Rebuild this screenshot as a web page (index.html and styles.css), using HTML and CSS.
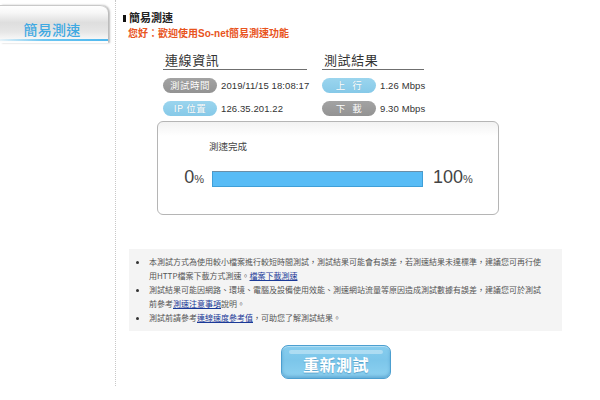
FILE: index.html
```html
<!DOCTYPE html>
<html lang="zh-Hant">
<head>
<meta charset="utf-8">
<title>簡易測速</title>
<link rel="stylesheet" href="styles.css">
</head>
<body>
<div class="page">
  <aside class="sidebar">
    <div class="tab"><span class="tab-label">簡易測速</span></div>
  </aside>
  <main class="main">
    <h1 class="title"><span class="marker"></span>簡易測速</h1>
    <p class="greeting">您好：歡迎使用So-net簡易測速功能</p>

    <div class="info">
      <div class="col">
        <h2 class="col-head">連線資訊</h2>
        <div class="row"><span class="pill grey">測試時間</span><span class="val">2019/11/15 18:08:17</span></div>
        <div class="row"><span class="pill blue">IP 位置</span><span class="val">126.35.201.22</span></div>
      </div>
      <div class="col">
        <h2 class="col-head">測試結果</h2>
        <div class="row"><span class="pill blue wide">上 行</span><span class="val">1.26 Mbps</span></div>
        <div class="row"><span class="pill grey wide">下 載</span><span class="val">9.30 Mbps</span></div>
      </div>
    </div>

    <div class="progress-box">
      <div class="status">測速完成</div>
      <div class="bar-row">
        <span class="pct left">0<small>%</small></span>
        <span class="bar"><span class="fill" style="width:100%"></span></span>
        <span class="pct right">100<small>%</small></span>
      </div>
    </div>

    <ul class="notes">
      <li><span class="ln">本測試方式為使用較小檔案進行較短時間測試，測試結果可能會有誤差，若測速結果未達標準，建議您可再行使</span><span class="ln">用HTTP檔案下載方式測速。<a href="#">檔案下載測速</a></span></li>
      <li><span class="ln">測試結果可能因網路、環境、電腦及設備使用效能、測速網站流量等原因造成測試數據有誤差，建議您可於測試</span><span class="ln">前參考<a href="#">測速注意事項</a>說明。</span></li>
      <li><span class="ln">測試前請參考<a href="#">連線速度參考值</a>，可助您了解測試結果。</span></li>
    </ul>

    <button class="retest" type="button">重新測試</button>
  </main>
</div>
</body>
</html>
```

FILE: styles.css
```css
html, body {
  margin: 0;
  padding: 0;
  background: #fff;
}
body {
  font-family: "Liberation Sans", "Noto Sans CJK TC", sans-serif;
  color: #333;
}
.page {
  display: flex;
  align-items: stretch;
  width: 600px;
}
.sidebar {
  width: 115px;
  border-right: 1px dotted #c8c8c8;
  flex: none;
}
.tab {
  position: relative;
  margin-top: 5px;
  width: 108px;
  height: 38px;
  box-sizing: border-box;
  border-top: 1px solid #c9c9c9;
  border-radius: 0 8px 0 0;
  background: linear-gradient(#ffffff 0, #f7f7f7 18%, #dedede 45%, #e6e6e6 70%, #f6f6f6 88%, #ffffff 100%);
  box-shadow: 2px 0 2px rgba(0,0,0,0.28);
  text-align: center;
  padding-top: 15px;
  padding-right: 4px;
}
.tab::after {
  content: "";
  position: absolute;
  left: 0;
  right: 0;
  bottom: 2px;
  height: 2px;
  background: linear-gradient(90deg, rgba(120,200,240,0.15), #6cc6f2 40%, #4fb8ee);
}
.tab-label {
  font-family: "Noto Sans CJK TC", sans-serif;
  font-size: 14px;
  line-height: 16px;
  color: #3fa9e2;
  letter-spacing: 0.3px;
  font-weight: 500;
}
.main {
  flex: 1;
  padding: 10px 0 7px 7px;
}
.title {
  margin: 0 0 3px;
  font-family: "Noto Sans CJK TC", sans-serif;
  font-size: 11px;
  line-height: 14px;
  font-weight: bold;
  color: #222;
  display: flex;
  align-items: center;
}
.marker {
  display: inline-block;
  width: 3px;
  height: 7px;
  background: #111;
  margin: 3px 3px 0 0;
}
.greeting {
  margin: 0;
  font-family: "Liberation Sans", "Noto Sans CJK TC", sans-serif;
  font-size: 10px;
  line-height: 14px;
  font-weight: bold;
  color: #e8541d;
  padding-left: 5px;
}
.info {
  display: grid;
  grid-template-columns: 144px 102px;
  column-gap: 15px;
  margin: 10px 0 0 40px;
}
.col-head {
  margin: 0 0 8px;
  font-family: "Noto Sans CJK TC", sans-serif;
  font-size: 13px;
  font-weight: normal;
  line-height: 18px;
  letter-spacing: 0.6px;
  color: #333;
  border-bottom: 1px solid #6f6f6f;
  padding-left: 2px;
}
.row {
  display: flex;
  align-items: center;
  gap: 4px;
  height: 15px;
  margin-bottom: 8px;
}
.row:last-child {
  margin-bottom: 0;
}
.pill {
  flex: none;
  width: 54px;
  height: 15px;
  border-radius: 8px;
  color: #fff;
  font-family: "Noto Sans CJK TC", sans-serif;
  font-size: 9.5px;
  line-height: 15px;
  text-align: center;
  letter-spacing: 0.5px;
  text-shadow: 0 0 1px rgba(0,0,0,0.15);
}
.pill.wide {
  word-spacing: 4px;
}
.pill.grey {
  background: linear-gradient(#a3a3a3, #939393);
}
.pill.blue {
  background: linear-gradient(#9bd5ee, #86c9e8);
}
.val {
  font-size: 9.5px;
  color: #333;
  white-space: nowrap;
  letter-spacing: 0.1px;
}
.progress-box {
  margin: 5px 0 0 34px;
  width: 342px;
  height: 94px;
  box-sizing: border-box;
  border: 1px solid #b5b5b5;
  border-radius: 6px;
  background: linear-gradient(#f2f2f2, #ffffff 14px);
  padding-top: 17px;
}
.status {
  margin-left: 51px;
  font-family: "Noto Sans CJK TC", sans-serif;
  font-size: 9.5px;
  line-height: 14px;
  color: #444;
}
.bar-row {
  display: flex;
  align-items: center;
  margin-top: 13px;
  height: 24px;
}
.pct {
  font-size: 18px;
  line-height: 24px;
  color: #444;
}
.pct small {
  font-size: 11px;
}
.pct.left {
  width: 46px;
  text-align: right;
  margin-right: 8px;
}
.pct.right {
  margin-left: 10px;
}
.bar {
  display: block;
  width: 211px;
  height: 16px;
  box-sizing: border-box;
  border: 1px solid #3f9fd8;
  border-top-color: #6a8fa8;
  background: #e8e8e8;
  margin-top: 2px;
}
.fill {
  display: block;
  height: 100%;
  background: #58bcf6;
}
.notes {
  margin: 34px 0 0 6px;
  width: 433px;
  height: 82px;
  box-sizing: border-box;
  padding: 6px 10px 7px 20px;
  background: #f4f4f4;
  list-style: disc;
  font-family: "Noto Sans CJK TC", sans-serif;
  font-size: 8px;
  line-height: 14px;
  color: #555;
}
.notes .ln {
  display: block;
  white-space: nowrap;
}
.notes li::marker {
  color: #333;
  font-size: 9px;
}
.notes a {
  color: #1b3a98;
  text-decoration: underline;
}
.retest {
  display: block;
  position: relative;
  margin: 14px 0 0 158px;
  width: 110px;
  height: 34px;
  box-sizing: border-box;
  border: 1px solid #4c9fd0;
  border-radius: 7px;
  background: linear-gradient(#86cdee, #7cc6ea 45%, #8dd1f0);
  box-shadow: inset 0 -2px 3px rgba(30,110,170,0.35), inset 0 1px 0 rgba(255,255,255,0.4);
  color: #fff;
  font-family: "Noto Sans CJK TC", sans-serif;
  font-size: 16px;
  font-weight: bold;
  line-height: 32px;
  letter-spacing: 0.5px;
  text-shadow: 0 1px 1px rgba(30,100,150,0.4);
  padding: 2px 0 0;
  cursor: pointer;
}
.retest::before {
  content: "";
  position: absolute;
  left: 7px;
  right: 7px;
  top: 4px;
  height: 4px;
  border-radius: 2px;
  background: rgba(255,255,255,0.35);
}
```
